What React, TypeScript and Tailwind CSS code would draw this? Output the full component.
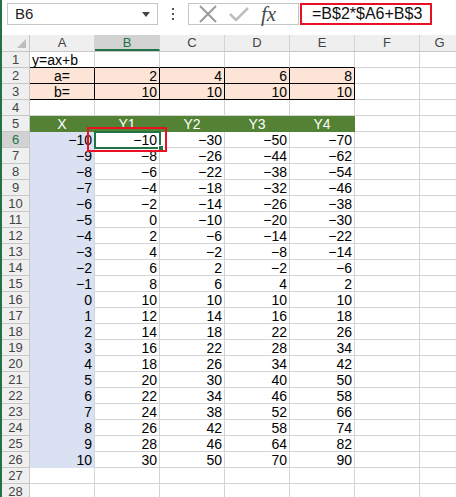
import React from "react"

const COLS = ["A", "B", "C", "D", "E", "F", "G"]
const COL_W = [65, 65, 65, 65, 65, 65, 40]
const ROWS = 28

type Cell = { text?: string; align?: "left" | "right" | "center"; kind?: "plain" | "peach" | "green" | "blue" }

function buildCell(r: number, c: number): Cell {
  // c: 0=A ... 6=G
  if (r === 1 && c === 0) return { text: "y=ax+b", align: "left" }
  if ((r === 2 || r === 3) && c <= 4) {
    if (c === 0) return { text: r === 2 ? "a=" : "b=", align: "center", kind: "peach" }
    return { text: r === 2 ? String(c * 2) : "10", align: "right", kind: "peach" }
  }
  if (r === 5 && c <= 4) return { text: ["X", "Y1", "Y2", "Y3", "Y4"][c], align: "center", kind: "green" }
  if (r >= 6 && r <= 26 && c <= 4) {
    const x = r - 16
    const v = c === 0 ? x : c * 2 * x + 10
    const t = v < 0 ? "−" + Math.abs(v) : String(v)
    return { text: t, align: "right", kind: c === 0 ? "blue" : "plain" }
  }
  return {}
}

function cellClass(cell: Cell, r: number, c: number) {
  let cls = "h-4 shrink-0 overflow-visible whitespace-nowrap leading-4 px-[2px] border-r border-b "
  if (cell.kind === "peach") cls += "bg-[#fce4d6] border-black "
  else if (cell.kind === "green") cls += "bg-[#548235] border-[#548235] text-white "
  else if (cell.kind === "blue") cls += "bg-[#d9e1f2] border-b-[#d9e1f2] border-r-[#d4d4d4] "
  else cls += "bg-white border-[#d4d4d4] "
  if (r === 1 && c <= 4) cls += "border-b-black "
  if (cell.align === "right") cls += "text-right "
  if (cell.align === "center") cls += "text-center "
  return cls
}

function FormulaBar() {
  return (
    <div className="h-[35px] flex items-start pt-[3px] bg-white">
      <div className="ml-[5px] w-[151px] h-[22px] border border-[#c6c6c6] flex items-center justify-between pl-[7px] pr-[7px]">
        <span className="text-[15px] text-[#222]">B6</span>
        <svg width="8" height="5" viewBox="0 0 8 5">
          <path d="M0 0 L8 0 L4 5 Z" fill="#444" />
        </svg>
      </div>
      <div className="w-[30px] h-[22px] flex items-center justify-center">
        <svg width="4" height="12" viewBox="0 0 4 12">
          <rect x="1" y="0" width="2" height="2" fill="#555" />
          <rect x="1" y="5" width="2" height="2" fill="#555" />
          <rect x="1" y="10" width="2" height="2" fill="#555" />
        </svg>
      </div>
      <div className="w-[111px] h-[22px] border border-[#c6c6c6] flex items-center">
        <svg className="ml-[9px]" width="20" height="18" viewBox="0 0 20 18">
          <path d="M2 1 L18 17 M18 1 L2 17" stroke="#9a9a9a" strokeWidth="2" />
        </svg>
        <svg className="ml-[11px]" width="20" height="14" viewBox="0 0 20 14">
          <path d="M1 7 L7 13 L19 1" stroke="#bdbdbd" strokeWidth="2.5" fill="none" />
        </svg>
        <span
          className="ml-[12px] text-[21px] italic text-[#4a4a4a] leading-none"
          style={{ fontFamily: "'Liberation Serif', serif" }}
        >
          fx
        </span>
      </div>
      <div className="ml-[1px] w-[132px] h-[22px] border-2 border-[#e81123] flex items-center pl-[10px]">
        <span className="text-[16px] text-[#111]">=B$2*$A6+B$3</span>
      </div>
    </div>
  )
}

function Grid() {
  const rows = Array.from({ length: ROWS }, (_, i) => i + 1)
  return (
    <div className="relative">
      <div className="flex h-[17px] bg-[#efefef] border-b border-[#c6c6c6]">
        <div className="w-[28px] shrink-0 border-r border-[#c6c6c6] relative">
          <svg className="absolute right-[3px] bottom-[3px]" width="9" height="9" viewBox="0 0 9 9">
            <path d="M9 0 L9 9 L0 9 Z" fill="#bdbdbd" />
          </svg>
        </div>
        {COLS.map((c, i) => (
          <div
            key={c}
            style={{ width: COL_W[i] }}
            className={
              "shrink-0 text-center text-[13px] leading-4 text-[#444] border-r border-[#d4d4d4] " +
              (c === "B" ? "bg-[#d2d2d2] border-b-2 border-b-[#217346] text-[#217346]" : "")
            }
          >
            {c}
          </div>
        ))}
      </div>
      {rows.map((r) => (
        <div key={r} className="flex text-[14px] text-black">
          <div
            className={
              "w-[28px] h-4 shrink-0 text-center text-[13px] leading-4 border-r border-b border-[#c6c6c6] " +
              (r === 6 ? "bg-[#d2d2d2] text-[#217346]" : "bg-[#efefef] text-[#444]")
            }
          >
            {r}
          </div>
          {COLS.map((_, c) => {
            const cell = buildCell(r, c)
            return (
              <div key={c} style={{ width: COL_W[c] }} className={cellClass(cell, r, c)}>
                {cell.text}
              </div>
            )
          })}
        </div>
      ))}
      {/* active cell B6 */}
      <div className="absolute left-[92px] top-[96px] w-[67px] h-[18px] border-2 border-[#217346]" />
      <div className="absolute left-[156px] top-[110px] w-[6px] h-[6px] bg-[#217346] border border-white" />
      {/* red annotation */}
      <div className="absolute left-[85px] top-[92px] w-[80px] h-[25px] border-2 border-[#e81123]" />
    </div>
  )
}

export default function App() {
  return (
    <div
      className="w-[456px] h-[497px] overflow-hidden bg-white border-l-2 border-[#217346]"
      style={{ fontFamily: "'Liberation Sans', Arial, sans-serif" }}
    >
      <FormulaBar />
      <Grid />
    </div>
  )
}
